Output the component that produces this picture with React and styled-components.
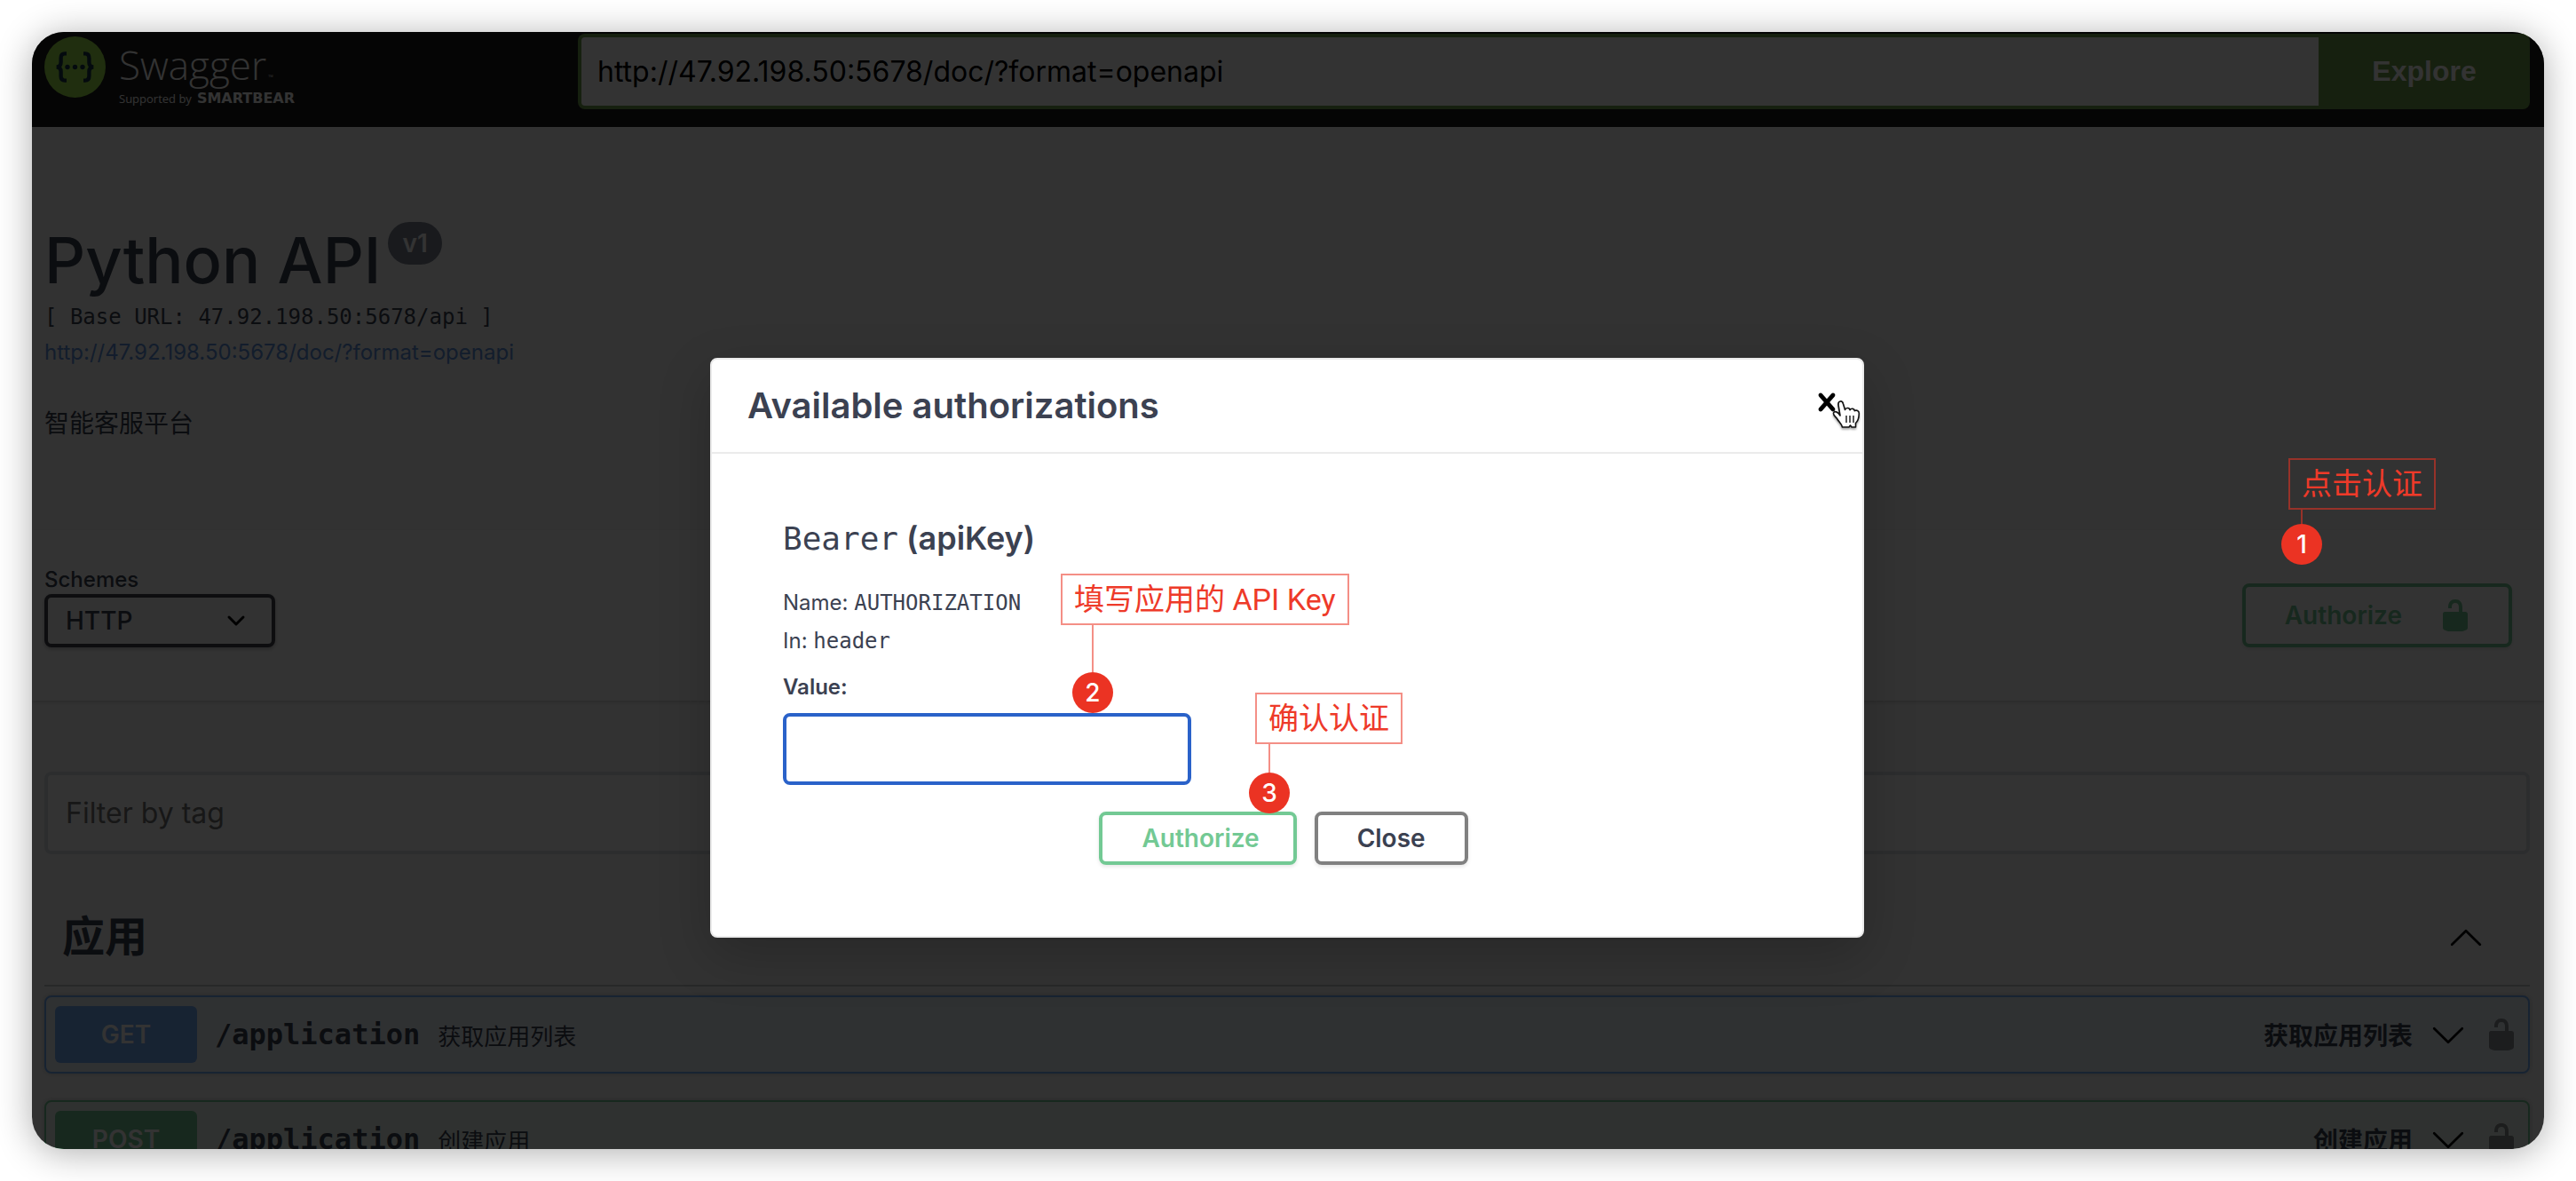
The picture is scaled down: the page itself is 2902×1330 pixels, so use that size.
import React from "react";
import styled, { createGlobalStyle } from "styled-components";

const sans = `Inter, "Noto Sans CJK SC", sans-serif`;
const mono = `"DejaVu Sans Mono", "Noto Sans CJK SC", monospace`;
const ink = "#3b4151";
const green = "#73c994";
const methods = {
  GET: { main: "#75aef8", tint: "#ecf3fb" },
  POST: { main: "#73c994", tint: "#ebf6ef" },
};

const Global = createGlobalStyle`
  *, *::before, *::after { box-sizing: border-box; }
  body { margin: 0; background: #fff; font-family: ${sans}; color: ${ink}; }
  h2, h3, h4, p, form { margin: 0; }
  button, input, select { font-family: ${sans}; }
`;

const Page = styled.div`
  display: flex;
  height: 100vh;
  padding: 36px;
  overflow: hidden;
`;

const Window = styled.div`
  position: relative;
  flex: 1;
  min-width: 0;
  overflow: hidden;
  border-radius: 36px;
  background: #fafafa;
`;

const Frame = styled.div`
  display: flex;
  flex: 1;
  min-width: 0;
  border-radius: 36px;
  box-shadow: 0 4px 40px rgba(0, 0, 0, 0.32);
`;

const Topbar = styled.header`
  display: flex;
  align-items: flex-start;
  padding: 2px 16px 20px 14px;
  background: #1b1b1b;
`;

const Brand = styled.a`
  display: flex;
  gap: 15px;
  flex: 0 0 601px;
  padding-top: 3px;
  text-decoration: none;
  color: #fff;
`;

const BrandText = styled.span`
  display: flex;
  flex-direction: column;
  font-family: "Open Sans", sans-serif;
`;

const BrandName = styled.span`
  display: flex;
  align-items: baseline;
  gap: 2px;
  height: 60px;
  font-size: 44px;
  font-weight: 300;
  line-height: 64px;
`;

const Trade = styled.span`
  font-size: 8px;
  line-height: 8px;
`;

const BrandBy = styled.span`
  display: flex;
  align-items: baseline;
  gap: 6px;
  font-size: 13px;
  line-height: 20px;
`;

const Company = styled.span`
  font-family: "DejaVu Sans", sans-serif;
  font-size: 16px;
  font-weight: 700;
`;

const UrlForm = styled.form`
  display: flex;
  flex: 1;
  height: 85px;
`;

const UrlInput = styled.input`
  flex: 1;
  min-width: 0;
  padding: 0 18px;
  border: 4px solid #719e4b;
  border-right: 0;
  border-radius: 8px 0 0 8px;
  background: #fff;
  color: #000;
  font-size: 32px;
`;

const ExploreButton = styled.button`
  width: 238px;
  padding: 0;
  border: 0;
  border-radius: 0 8px 8px 0;
  background: #719e4b;
  color: #fff;
  font-family: "Liberation Sans", sans-serif;
  font-size: 32px;
  font-weight: 700;
`;

const Info = styled.section`
  padding: 106px 16px 100px 14px;
`;

const Title = styled.h2`
  display: flex;
  align-items: flex-start;
  gap: 8px;
  font-size: 72px;
  font-weight: 500;
  line-height: 88px;
`;

const Version = styled.small`
  margin-top: 1px;
  padding: 0 16px;
  border-radius: 24px;
  background: #7d8492;
  color: #fff;
  font-size: 28px;
  font-weight: 600;
  line-height: 48px;
`;

const BaseUrl = styled.p`
  font-family: ${mono};
  font-size: 24px;
  line-height: 40px;
  white-space: pre;
`;

const DocLink = styled.a`
  display: block;
  margin-top: 4px;
  color: #5e8fdc;
  font-size: 24px;
  line-height: 32px;
  text-decoration: none;
`;

const Description = styled.p`
  margin-top: 44px;
  font-size: 28px;
  line-height: 40px;
`;

const SchemeBar = styled.section`
  display: flex;
  justify-content: space-between;
  align-items: flex-end;
  padding: 40px 36px 60px 14px;
  background: #fff;
  box-shadow: 0 2px 4px rgba(0, 0, 0, 0.15);
`;

const SchemeLabel = styled.label`
  display: block;
  font-size: 24px;
  font-weight: 500;
  line-height: 32px;
`;

const SelectBox = styled.div`
  position: relative;
  width: 260px;
`;

const Select = styled.select`
  width: 100%;
  height: 60px;
  padding: 0 20px;
  appearance: none;
  border: 4px solid #41444e;
  border-radius: 8px;
  background: #fafafa;
  box-shadow: 0 2px 4px rgba(0, 0, 0, 0.25);
  color: ${ink};
  font-size: 28px;
  font-weight: 500;
`;

const SelectArrow = styled.svg`
  position: absolute;
  right: 32px;
  top: 20px;
  pointer-events: none;
`;

const Button = styled.button`
  display: flex;
  align-items: center;
  gap: 40px;
  height: ${(p) => p.$height || 60}px;
  padding: ${(p) => p.$padding || "0 44px"};
  border: 4px solid ${(p) => (p.$primary ? green : "#808080")};
  border-radius: 8px;
  background: transparent;
  box-shadow: 0 2px 4px rgba(0, 0, 0, 0.1);
  color: ${(p) => (p.$primary ? green : ink)};
  font-size: 28px;
  font-weight: 600;
`;

const Content = styled.main`
  padding: 80px 16px 0 14px;
`;

const FilterInput = styled.input`
  display: block;
  width: 100%;
  height: 93px;
  padding: 0 20px;
  border: 4px solid #dcdfe6;
  border-radius: 8px;
  background: #fff;
  font-size: 32px;

  &::placeholder {
    color: #757575;
  }
`;

const TagHeader = styled.div`
  display: flex;
  align-items: center;
  justify-content: space-between;
  margin: 39px 0 10px;
  padding: 18px 52px 18px 20px;
  border-bottom: 2px solid #c3c5c9;
`;

const TagName = styled.h3`
  font-size: 48px;
  font-weight: 700;
  line-height: 72px;
`;

const Operations = styled.div`
  display: flex;
  flex-direction: column;
  gap: 30px;
`;

const Operation = styled.div`
  display: flex;
  align-items: center;
  gap: 20px;
  padding: 10px;
  border: 2px solid ${(p) => methods[p.$method].main};
  border-radius: 8px;
  background: ${(p) => methods[p.$method].tint};
  box-shadow: 0 0 6px rgba(0, 0, 0, 0.19);
`;

const Method = styled.span`
  width: 160px;
  border-radius: 6px;
  background: ${(p) => methods[p.$method].main};
  color: #fff;
  font-size: 28px;
  font-weight: 600;
  line-height: 64px;
  text-align: center;
`;

const Path = styled.span`
  font-family: ${mono};
  font-size: 32px;
  font-weight: 700;
`;

const Summary = styled.span`
  flex: 1;
  font-size: 26px;
`;

const OperationId = styled.span`
  font-size: 28px;
  font-weight: 700;
`;

const IconButton = styled.button`
  display: flex;
  padding: 0;
  border: 0;
  background: none;
  color: ${(p) => p.$color || "#000"};
`;

const Overlay = styled.div`
  position: absolute;
  inset: 0;
  display: flex;
  justify-content: center;
  align-items: flex-start;
  padding: 367px 2px 0 0;
  background: rgba(0, 0, 0, 0.8);
`;

const Modal = styled.div`
  position: relative;
  width: 1300px;
  border: 2px solid #ebebeb;
  border-radius: 8px;
  background: #fff;
  box-shadow: 0 20px 60px rgba(0, 0, 0, 0.2);
`;

const ModalHeader = styled.div`
  display: flex;
  align-items: flex-start;
  justify-content: space-between;
  padding: 28px 20px 28px 40px;
  border-bottom: 2px solid #ebebeb;
`;

const ModalTitle = styled.h3`
  font-size: 40px;
  font-weight: 600;
  line-height: 48px;
`;

const ModalBody = styled.form`
  padding: 73px 80px 80px;
`;

const AuthTitle = styled.h4`
  margin-bottom: 34px;
  font-size: 36px;
  font-weight: 600;
  line-height: 44px;
`;

const Code = styled.code`
  font-family: ${mono};
  font-weight: 400;
`;

const Detail = styled.p`
  margin-bottom: 11px;
  font-size: 24px;
  line-height: 32px;
`;

const ValueLabel = styled.label`
  display: block;
  margin: 20px 0 13px;
  font-size: 24px;
  font-weight: 600;
  line-height: 32px;
`;

const ValueInput = styled.input`
  display: block;
  width: 460px;
  height: 81px;
  padding: 0 16px;
  border: 4px solid #2a62c9;
  border-radius: 8px;
  background: #fff;
  font-size: 28px;
`;

const Actions = styled.div`
  display: flex;
  justify-content: center;
  gap: 20px;
  margin-top: 30px;
  padding-right: 8px;
`;

const Callout = styled.div`
  position: absolute;
  left: ${(p) => p.$left};
  right: ${(p) => p.$right};
  top: ${(p) => p.$top}px;
  display: flex;
  flex-direction: column;
  align-items: flex-start;
  padding-left: 8px;
`;

const CalloutText = styled.span`
  padding: 0 13px;
  border: 2px solid rgba(235, 51, 35, 0.55);
  color: #ee3a29;
  font-family: Roboto, "Noto Sans CJK SC", sans-serif;
  font-size: 34px;
  line-height: 54px;
  white-space: nowrap;
`;

const CalloutStem = styled.span`
  width: 2px;
  height: ${(p) => p.$length}px;
  margin-left: ${(p) => p.$indent - 1}px;
  background: rgba(235, 51, 35, 0.55);
`;

const CalloutNumber = styled.span`
  width: 46px;
  margin-left: ${(p) => p.$indent - 23}px;
  border-radius: 50%;
  background: #eb3323;
  color: #fff;
  font-size: 28px;
  font-weight: 500;
  line-height: 46px;
  text-align: center;
`;

const Pointer = styled.svg`
  position: absolute;
  right: 0;
  top: 44px;
  filter: drop-shadow(0 2px 1px rgba(0, 0, 0, 0.35));
`;

function Note({ number, text, left = "auto", right = "auto", top, stem, indent }) {
  return (
    <Callout $left={left} $right={right} $top={top}>
      <CalloutText>{text}</CalloutText>
      <CalloutStem $length={stem} $indent={indent} />
      <CalloutNumber $indent={indent}>{number}</CalloutNumber>
    </Callout>
  );
}

function Lock() {
  return (
    <svg width="40" height="40" viewBox="0 0 20 20" fill="currentColor" aria-hidden="true">
      <path d="M15.8 8H14V5.6C14 2.703 12.665 1 10 1 7.334 1 6 2.703 6 5.6V6h2v-.801C8 3.754 8.797 3 10 3c1.203 0 2 .754 2 2.199V8H4c-.553 0-1 .646-1 1.199V17c0 .549.428 1.139.951 1.307l1.197.387C5.672 18.861 6.55 19 7.1 19h5.8c.549 0 1.428-.139 1.951-.307l1.196-.387c.524-.167.953-.757.953-1.306V9.199C17 8.646 16.352 8 15.8 8z" />
    </svg>
  );
}

function Arrow({ up }) {
  return (
    <svg width="40" height="40" viewBox="0 0 20 20" fill="none" stroke="currentColor" strokeWidth="1.35" strokeLinecap="round" strokeLinejoin="round" aria-hidden="true">
      <path d={up ? "M2.1 14.4 10 6.6l7.9 7.8" : "M2.1 6.6 10 14.4l7.9-7.8"} />
    </svg>
  );
}

function Logo() {
  return (
    <svg width="69" height="69" viewBox="0 0 69 69" aria-hidden="true">
      <circle cx="34.5" cy="34.5" r="34.5" fill="#a0e64b" />
      <g fill="none" stroke="#173647" strokeWidth="4.4">
        <path d="M25 19.4h-2c-3.4 0-4.4 1.8-4.400 5v4.600c0 3.600-1.300 5.500-5 5.500 3.700 0 5 1.900 5 5.500v4.600c0 3.200 1 5 4.400 5h2" />
        <path d="M44 19.4h2c3.400 0 4.400 1.800 4.400 5v4.600c0 3.600 1.300 5.500 5 5.500-3.700 0-5 1.900-5 5.500v4.600c0 3.200-1 5-4.400 5h-2" />
      </g>
      <g fill="#173647">
        <circle cx="26" cy="34.5" r="2.7" />
        <circle cx="34.5" cy="34.5" r="2.7" />
        <circle cx="43" cy="34.5" r="2.7" />
      </g>
    </svg>
  );
}

const operations = [
  { method: "GET", path: "/application", summary: "获取应用列表" },
  { method: "POST", path: "/application", summary: "创建应用" },
];

export default function App() {
  return (
    <Page>
      <Global />
      <Frame>
        <Window>
          <Topbar>
            <Brand href="#">
              <Logo />
              <BrandText>
                <BrandName>
                  Swagger<Trade>™</Trade>
                </BrandName>
                <BrandBy>
                  Supported by <Company>SMARTBEAR</Company>
                </BrandBy>
              </BrandText>
            </Brand>
            <UrlForm>
              <UrlInput aria-label="Specification URL" defaultValue="http://47.92.198.50:5678/doc/?format=openapi" />
              <ExploreButton type="button">Explore</ExploreButton>
            </UrlForm>
          </Topbar>

          <Info>
            <Title>
              Python API <Version>v1</Version>
            </Title>
            <BaseUrl>[ Base URL: 47.92.198.50:5678/api ]</BaseUrl>
            <DocLink href="#">http://47.92.198.50:5678/doc/?format=openapi</DocLink>
            <Description>智能客服平台</Description>
          </Info>

          <SchemeBar>
            <div>
              <SchemeLabel htmlFor="scheme">Schemes</SchemeLabel>
              <SelectBox>
                <Select id="scheme">
                  <option>HTTP</option>
                </Select>
                <SelectArrow width="24" height="20" viewBox="0 0 24 20" fill="none" stroke="#000" strokeWidth="3" strokeLinecap="round" strokeLinejoin="round">
                  <path d="M4 6l8 8 8-8" />
                </SelectArrow>
              </SelectBox>
            </div>
            <Button type="button" $primary $height={72} $padding="0 40px 0 44px">
              Authorize
              <Lock />
            </Button>
          </SchemeBar>

          <Content>
            <FilterInput aria-label="Filter by tag" placeholder="Filter by tag" />
            <TagHeader>
              <TagName>应用</TagName>
              <IconButton type="button" aria-label="Collapse">
                <Arrow up />
              </IconButton>
            </TagHeader>
            <Operations>
              {operations.map((op) => (
                <Operation key={op.method} $method={op.method}>
                  <Method $method={op.method}>{op.method}</Method>
                  <Path>{op.path}</Path>
                  <Summary>{op.summary}</Summary>
                  <OperationId>{op.summary}</OperationId>
                  <IconButton type="button" aria-label="Expand">
                    <Arrow />
                  </IconButton>
                  <IconButton type="button" aria-label="Authorization" $color="rgba(0, 0, 0, 0.4)">
                    <Lock />
                  </IconButton>
                </Operation>
              ))}
            </Operations>
          </Content>

          <Overlay>
            <Modal role="dialog" aria-labelledby="auth-title">
              <ModalHeader>
                <ModalTitle id="auth-title">Available authorizations</ModalTitle>
                <IconButton type="button" aria-label="Close dialog">
                  <svg width="40" height="40" viewBox="0 0 20 20" fill="currentColor" aria-hidden="true">
                    <path d="M14.348 14.849c-.469.469-1.229.469-1.697 0L10 11.819l-2.651 3.029c-.469.469-1.229.469-1.697 0-.469-.469-.469-1.229 0-1.697l2.758-3.15-2.759-3.152c-.469-.469-.469-1.228 0-1.697.469-.469 1.228-.469 1.697 0L10 8.183l2.651-3.031c.469-.469 1.228-.469 1.697 0 .469.469.469 1.229 0 1.697l-2.758 3.152 2.758 3.15c.469.469.469 1.229 0 1.698z" />
                  </svg>
                </IconButton>
              </ModalHeader>
              <ModalBody>
                <AuthTitle>
                  <Code>Bearer</Code> (apiKey)
                </AuthTitle>
                <Detail>
                  Name: <Code>AUTHORIZATION</Code>
                </Detail>
                <Detail>
                  In: <Code>header</Code>
                </Detail>
                <ValueLabel htmlFor="token">Value:</ValueLabel>
                <ValueInput id="token" type="text" />
                <Actions>
                  <Button type="button" $primary $padding="0 38px 0 44px">
                    Authorize
                  </Button>
                  <Button type="button">Close</Button>
                </Actions>
              </ModalBody>
              <Note number={2} text="填写应用的 API Key" left="385px" top={241} stem={53} indent={36} />
              <Note number={3} text="确认认证" left="604px" top={375} stem={32} indent={16} />
              <Pointer width="34" height="38" viewBox="0 0 34 38" aria-hidden="true">
                <path
                  d="M9 19 7 7C6.500 2 11.500 1.500 12.500 6l2 6.500c1-3 5.500-2.500 5.500.300 1.500-2.400 5.200-1.700 5.300.900 2-1.400 5.300-.300 5 3.300-.100 4-1 8-3.800 10.500v4.500H22l-1.500-2-1.500 2h-7.500c-.500-3-4-6-6-9.500C3.500 20 1 18.500 1.500 16c1-2.500 5-1.500 7.500 3z"
                  fill="#fff"
                  stroke="#111"
                  strokeWidth="1.6"
                  strokeLinejoin="round"
                />
                <path d="M16 19v8M20 19v8M24 19v8" stroke="#111" strokeWidth="1.4" />
              </Pointer>
            </Modal>
          </Overlay>

          <Note number={1} text="点击认证" right="122px" top={480} stem={16} indent={15} />
        </Window>
      </Frame>
    </Page>
  );
}
